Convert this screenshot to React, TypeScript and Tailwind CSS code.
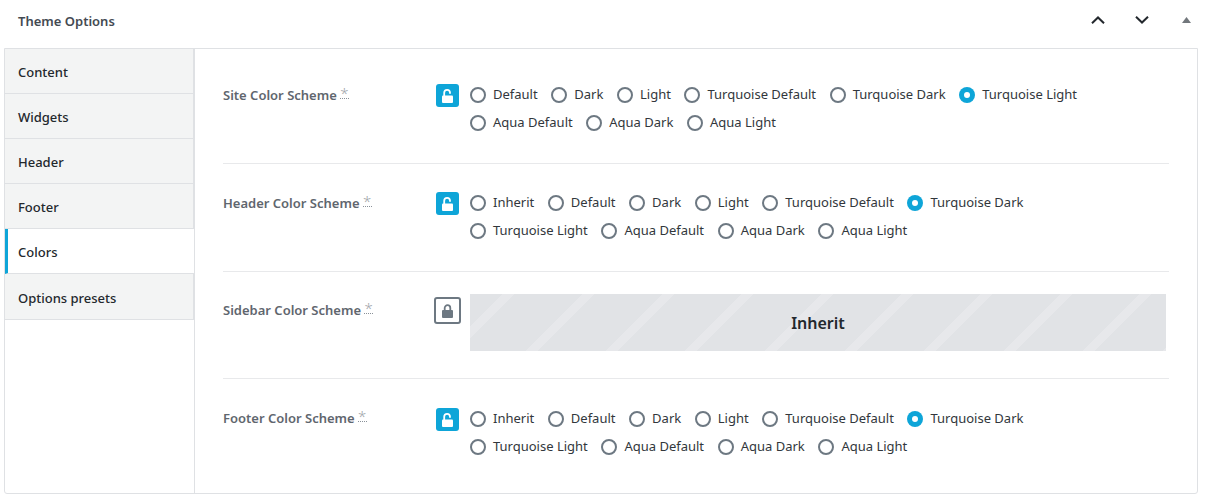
const tabs = ["Content", "Widgets", "Header", "Footer", "Colors", "Options presets"];

type Scheme = {
  label: string;
  locked?: boolean;
  options?: string[];
  selected?: string;
  rowClass: string;
  labelClass: string;
};

const schemes: Scheme[] = [
  {
    label: "Site Color Scheme",
    options: ["Default", "Dark", "Light", "Turquoise Default", "Turquoise Dark", "Turquoise Light", "Aqua Default", "Aqua Dark", "Aqua Light"],
    selected: "Turquoise Light",
    rowClass: "pt-[32px] pb-[26px]",
    labelClass: "pt-[5px]",
  },
  {
    label: "Header Color Scheme",
    options: ["Inherit", "Default", "Dark", "Light", "Turquoise Default", "Turquoise Dark", "Turquoise Light", "Aqua Default", "Aqua Dark", "Aqua Light"],
    selected: "Turquoise Dark",
    rowClass: "pt-[25px] pb-[26px]",
    labelClass: "pt-[5px]",
  },
  {
    label: "Sidebar Color Scheme",
    locked: true,
    rowClass: "pt-[22px] pb-[27px]",
    labelClass: "pt-[7px]",
  },
  {
    label: "Footer Color Scheme",
    options: ["Inherit", "Default", "Dark", "Light", "Turquoise Default", "Turquoise Dark", "Turquoise Light", "Aqua Default", "Aqua Dark", "Aqua Light"],
    selected: "Turquoise Dark",
    rowClass: "pt-[26px] pb-[33px]",
    labelClass: "pt-[4px]",
  },
];

function Radio({ label, checked }: { label: string; checked: boolean }) {
  return (
    <label className="flex h-[28px] items-center gap-[7px] text-[13px] text-[#32373c]">
      {checked ? (
        <span className="flex h-4 w-4 items-center justify-center rounded-full bg-[#0ea5d8]">
          <span className="h-[6px] w-[6px] rounded-full bg-white" />
        </span>
      ) : (
        <span className="h-4 w-4 rounded-full border-2 border-[#6d7882] bg-white" />
      )}
      {label}
    </label>
  );
}

function SchemeRow({ scheme, last }: { scheme: Scheme; last: boolean }) {
  return (
    <div className={`flex ${scheme.rowClass} ${last ? "" : "border-b border-[#e8e9eb]"}`}>
      <div className={`w-[213px] text-[13px] font-semibold text-[#5f666e] ${scheme.labelClass}`}>
        {scheme.label}
        <span className="relative ml-[3px] inline-block h-[13px] w-[9px] border-b border-dotted border-[#8a9199] text-center align-top text-[15px] leading-[15px] font-light text-[#a0a5aa]">*</span>
      </div>
      {scheme.locked ? (
        <button className="mt-[3px] -ml-[2px] flex h-[27px] w-[27px] items-center justify-center rounded-[3px] border-2 border-[#6d7882] bg-white">
          <svg width="11" height="14" viewBox="0 0 11 14" className="text-[#6d7882]">
            <path d="M2.7 6.5V4a2.8 2.8 0 0 1 5.6 0v2.5" fill="none" stroke="currentColor" strokeWidth="1.8" />
            <rect x="0" y="6" width="11" height="8" rx="1" fill="currentColor" />
          </svg>
        </button>
      ) : (
        <button className="mt-[3px] flex h-[23px] w-[23px] items-center justify-center rounded-[3px] bg-[#0ea5d8]">
          <svg width="11" height="14" viewBox="0 0 11 14" className="text-white">
            <path d="M2.2 7V3.8a2.9 2.9 0 0 1 5.8 0v1" fill="none" stroke="currentColor" strokeWidth="1.8" />
            <rect x="0" y="6.5" width="11" height="7.5" rx="1" fill="currentColor" />
          </svg>
        </button>
      )}
      {scheme.options ? (
        <div className="ml-[11px] flex w-[680px] flex-wrap content-start gap-x-[13.6px] self-start">
          {scheme.options.map((option) => (
            <Radio key={option} label={option} checked={option === scheme.selected} />
          ))}
        </div>
      ) : (
        <div className="ml-[9px] flex h-[57px] w-[696px] items-center justify-center bg-[#e1e3e6] bg-[repeating-linear-gradient(135deg,transparent_0,transparent_23.3px,#e7e8eb_23.3px,#e7e8eb_31.8px,transparent_31.8px,transparent_56.3px)] text-[16px] font-semibold text-[#23282d]">
          Inherit
        </div>
      )}
    </div>
  );
}

export default function App() {
  return (
    <div className="h-[501px] w-[1206px] overflow-hidden bg-white font-['Noto_Sans',sans-serif]">
      <div className="flex h-[48px] items-center justify-between pr-[15px] pl-[18px]">
        <h2 className="mb-[4px] text-[13px] font-semibold text-[#444a52]">Theme Options</h2>
        <div className="mb-[8px] flex items-center text-[#23282d]">
          <svg width="14" height="8" viewBox="0 0 14 8" fill="none" stroke="currentColor" strokeWidth="2" className="mr-[30px]">
            <path d="M1 7.3 7 1.5l6 5.8" />
          </svg>
          <svg width="14" height="8" viewBox="0 0 14 8" fill="none" stroke="currentColor" strokeWidth="2" className="mr-[33px]">
            <path d="M1 .7 7 6.5 13 .7" />
          </svg>
          <svg width="9" height="6" viewBox="0 0 9 6" className="text-[#72777c]" fill="currentColor">
            <path d="M4.5 0 9 6H0z" />
          </svg>
        </div>
      </div>
      <div className="mx-[4px] flex h-[446px] w-[1194px] rounded-b-[3px] border border-[#dfe1e4]">
        <ul className="w-[189px] shrink-0">
          {tabs.map((tab, i) => {
            const active = tab === "Colors";
            return (
              <li
                key={tab}
                className={`flex items-center border-b border-[#dfe1e4] pt-[4px] pl-[13px] text-[13px] font-medium text-[#23282d] ${
                  active ? "border-l-[3px] !pl-[10px] border-l-[#0ea5d8] bg-white" : "border-r bg-[#f3f4f4]"
                } ${i === tabs.length - 1 ? "h-[46px]" : "h-[45px]"}`}
              >
                {tab}
              </li>
            );
          })}
        </ul>
        <div className="flex-1 border-l border-[#dfe1e4] pr-[28px] pl-[28px]">
          {schemes.map((scheme, i) => (
            <SchemeRow key={scheme.label} scheme={scheme} last={i === schemes.length - 1} />
          ))}
        </div>
      </div>
    </div>
  );
}
